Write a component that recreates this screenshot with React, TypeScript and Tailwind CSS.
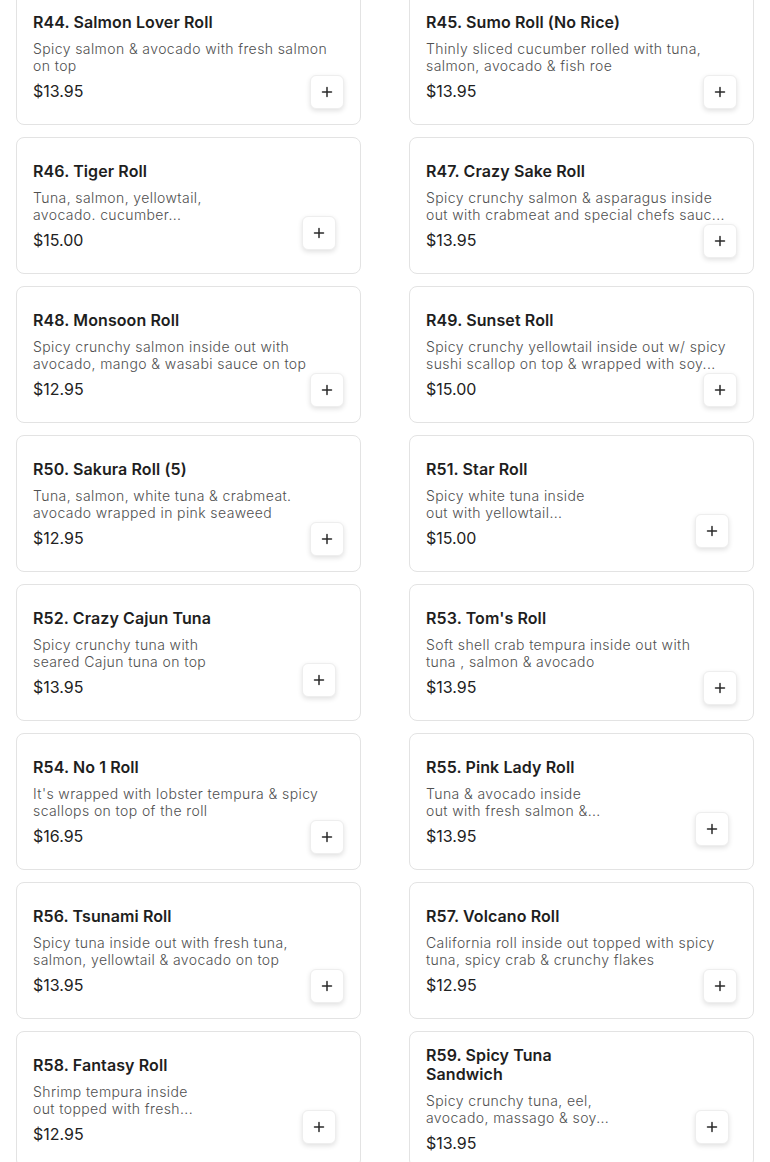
import React from "react";

type Item = { title: string; desc: string[]; price: string; narrow?: boolean };

const items: Item[] = [
  { title: "R44. Salmon Lover Roll", desc: ["Spicy salmon & avocado with fresh salmon", "on top"], price: "$13.95" },
  { title: "R45. Sumo Roll (No Rice)", desc: ["Thinly sliced cucumber rolled with tuna,", "salmon, avocado & fish roe"], price: "$13.95" },
  { title: "R46. Tiger Roll", desc: ["Tuna, salmon, yellowtail,", "avocado. cucumber..."], price: "$15.00", narrow: true },
  { title: "R47. Crazy Sake Roll", desc: ["Spicy crunchy salmon & asparagus inside", "out with crabmeat and special chefs sauc..."], price: "$13.95" },
  { title: "R48. Monsoon Roll", desc: ["Spicy crunchy salmon inside out with", "avocado, mango & wasabi sauce on top"], price: "$12.95" },
  { title: "R49. Sunset Roll", desc: ["Spicy crunchy yellowtail inside out w/ spicy", "sushi scallop on top & wrapped with soy..."], price: "$15.00" },
  { title: "R50. Sakura Roll (5)", desc: ["Tuna, salmon, white tuna & crabmeat.", "avocado wrapped in pink seaweed"], price: "$12.95" },
  { title: "R51. Star Roll", desc: ["Spicy white tuna inside", "out with yellowtail..."], price: "$15.00", narrow: true },
  { title: "R52. Crazy Cajun Tuna", desc: ["Spicy crunchy tuna with", "seared Cajun tuna on top"], price: "$13.95", narrow: true },
  { title: "R53. Tom's Roll", desc: ["Soft shell crab tempura inside out with", "tuna , salmon & avocado"], price: "$13.95" },
  { title: "R54. No 1 Roll", desc: ["It's wrapped with lobster tempura & spicy", "scallops on top of the roll"], price: "$16.95" },
  { title: "R55. Pink Lady Roll", desc: ["Tuna & avocado inside", "out with fresh salmon &..."], price: "$13.95", narrow: true },
  { title: "R56. Tsunami Roll", desc: ["Spicy tuna inside out with fresh tuna,", "salmon, yellowtail & avocado on top"], price: "$13.95" },
  { title: "R57. Volcano Roll", desc: ["California roll inside out topped with spicy", "tuna, spicy crab & crunchy flakes"], price: "$12.95" },
  { title: "R58. Fantasy Roll", desc: ["Shrimp tempura inside", "out topped with fresh..."], price: "$12.95", narrow: true },
  { title: "R59. Spicy Tuna Sandwich", desc: ["Spicy crunchy tuna, eel,", "avocado, massago & soy..."], price: "$13.95", narrow: true },
];

function PlusButton({ narrow }: { narrow?: boolean }) {
  return (
    <button
      className={`absolute flex h-[34px] w-[34px] items-center justify-center rounded-md border border-[#eeeeee] bg-white shadow-[0_2px_5px_rgba(0,0,0,0.12)] ${
        narrow ? "bottom-[23px] right-6" : "bottom-[15px] right-4"
      }`}
    >
      <svg width="12" height="12" viewBox="0 0 12 12" fill="none">
        <path d="M6 1.5v9M1.5 6h9" stroke="#2a2a2a" strokeWidth="1.5" strokeLinecap="round" />
      </svg>
    </button>
  );
}

function Card({ item }: { item: Item }) {
  return (
    <div className="relative flex h-[137px] rounded-lg border border-[#e3e3e3] bg-white px-4">
      <div className={`flex min-w-0 flex-col justify-center ${item.narrow ? "w-[180px]" : "w-full"}`}>
        <div className="text-[16px] font-semibold leading-[19px] tracking-[0.1px] text-[#1e1e1e]">{item.title}</div>
        <div className="mt-[8px] text-[14px] font-light leading-[17px] tracking-[0.4px] text-[#505050]">
          {item.desc.map((line) => (
            <div key={line} className="whitespace-nowrap">
              {line}
            </div>
          ))}
        </div>
        <div className="mt-[7px] text-[16px] leading-[20px] text-[#222222]">{item.price}</div>
      </div>
      <PlusButton narrow={item.narrow} />
    </div>
  );
}

export default function App() {
  return (
    <div className="min-h-screen overflow-hidden bg-white font-['Inter',sans-serif]">
      <div className="-mt-[12px] grid grid-cols-2 gap-x-12 gap-y-3 px-4">
        {items.map((it) => (
          <Card key={it.title} item={it} />
        ))}
      </div>
    </div>
  );
}
